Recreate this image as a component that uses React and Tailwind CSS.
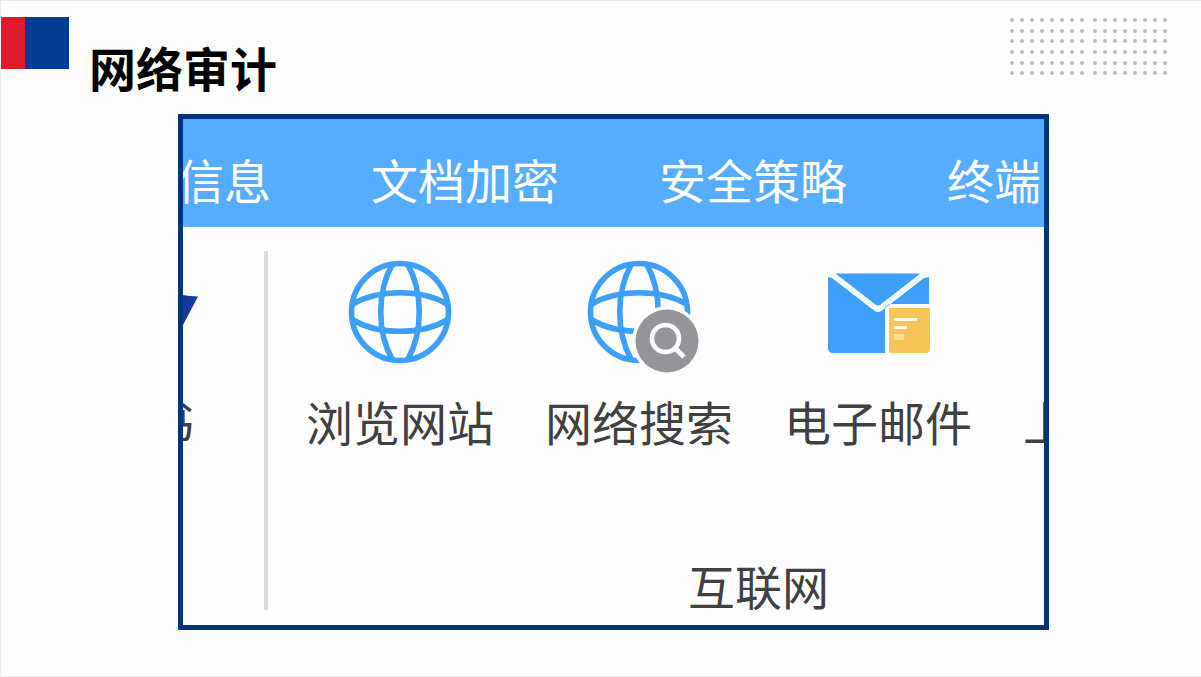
const DOT_COLUMNS = [3, 13, 23, 33, 43, 53, 63, 73, 86, 96, 106, 116, 126, 136, 146, 156];
const DOT_ROWS = [3, 14, 24, 35, 46, 56];

const TABS = ['信息', '文档加密', '安全策略', '终端'];

const BrandMark = () => (
  <div className="flex h-[52px] w-[68px] shrink-0">
    <div className="w-6 bg-[#e11b2e]" />
    <div className="flex-1 bg-[#003c96]" />
  </div>
);

const DotGrid = () => (
  <svg width="160" height="60" viewBox="0 0 160 60" className="shrink-0" fill="#b9b8c8" aria-hidden="true">
    {DOT_ROWS.map((y) =>
      DOT_COLUMNS.map((x) => <circle key={`${x}-${y}`} cx={x} cy={y} r="2" />)
    )}
  </svg>
);

const GlobeLines = () => (
  <g fill="none" stroke="#3d9ff8" strokeWidth="5.6">
    <circle cx="60" cy="55" r="48.5" />
    <path d="M52 8 C37 35 37 75 52 102 M68 8 C83 35 83 75 68 102" />
    <path d="M13 47 C38 32 82 32 107 47 M13 63 C38 78 82 78 107 63" />
  </g>
);

const GlobeIcon = () => (
  <svg width="120" height="120" viewBox="0 0 120 120" aria-hidden="true">
    <GlobeLines />
  </svg>
);

const GlobeSearchIcon = () => (
  <svg width="120" height="120" viewBox="0 0 120 120" aria-hidden="true">
    <GlobeLines />
    <circle cx="88" cy="84" r="35" fill="#fefefe" />
    <circle cx="88" cy="84" r="31.5" fill="#939599" />
    <circle cx="86.5" cy="81.5" r="13.5" fill="none" stroke="#fefefe" strokeWidth="4.6" />
    <path d="M96 91 L105 100" stroke="#fefefe" strokeWidth="5" fill="none" />
  </svg>
);

const MailIcon = () => (
  <svg width="120" height="120" viewBox="0 0 120 120" aria-hidden="true">
    <path d="M16 16.5 H103 L60 50 Z" fill="#3d9ff8" />
    <path
      d="M10 20 L14 21 L56 53.5 Q60 56.5 64 53.5 L106 21 L111 20 V47 H67 V96 H15 Q10 96 10 91 Z"
      fill="#3d9ff8"
    />
    <path d="M14 17 L56 49.5 Q60 52.5 64 49.5 L106 17" fill="none" stroke="#f2f8ff" strokeWidth="5" />
    <path d="M71 51 H112 V92 Q112 96 108 96 H71 Z" fill="#f3c657" />
    <path d="M76 62.5 H99 M76 70.5 H89" stroke="#fff8e6" strokeWidth="3.2" />
    <path d="M76 80 H86" stroke="#f9dd98" strokeWidth="6" />
  </svg>
);

const TriangleIcon = () => (
  <svg width="52" height="120" viewBox="0 0 52 120" className="max-w-none" aria-hidden="true">
    <path d="M0 38 H36 Q42 39 51 39.5 L35 70 H0 Z" fill="#153a9b" />
  </svg>
);

const ITEMS = [
  { label: '浏览网站', icon: <GlobeIcon /> },
  { label: '网络搜索', icon: <GlobeSearchIcon /> },
  { label: '电子邮件', icon: <MailIcon /> },
  { label: '上', icon: null },
];

const RibbonItem = ({ label, icon }) => (
  <button type="button" className="flex w-[188px] shrink-0 cursor-pointer flex-col gap-5 text-left">
    <span className="flex h-[120px] justify-center">{icon}</span>
    <span>{label}</span>
  </button>
);

const App = () => {
  return (
    <main className="min-h-screen border-t border-l border-b border-[#ebebf0] bg-[#fdfdfe] pt-4 pb-[46px] font-['Noto_Sans_CJK_SC',sans-serif]">
      <header className="flex h-[97px] items-start">
        <BrandMark />
        <h1 className="mt-[26px] ml-5 flex-1 text-[47px] leading-[48px] font-bold text-black">网络审计</h1>
        <div className="mr-8">
          <DotGrid />
        </div>
      </header>

      <section className="mr-[152px] ml-[177px] overflow-hidden border-[5px] border-[#003579] bg-[#fefefe] text-[47px] leading-[48px] font-normal whitespace-nowrap">
        <nav className="flex h-[108px] items-center bg-[#56adff] pt-3">
          <div className="-ml-1.5 flex gap-[100px] text-white">
            {TABS.map((tab) => (
              <button key={tab} type="button" className="shrink-0 cursor-pointer">
                {tab}
              </button>
            ))}
          </div>
        </nav>

        <div className="-ml-9 flex pt-6 pb-[15px] text-[#404040]">
          <button type="button" className="flex w-[47px] shrink-0 cursor-pointer flex-col gap-5 pt-[6px] text-left">
            <TriangleIcon />
            <span>书</span>
          </button>

          <div className="ml-[70px] h-[359px] w-1 shrink-0 bg-[#dadada]" />

          <div className="ml-[38px] flex shrink-0 flex-col pt-[6px]">
            <div className="flex gap-[51px]">
              {ITEMS.map((item) => (
                <RibbonItem key={item.label} label={item.label} icon={item.icon} />
              ))}
            </div>
            <h2 className="mt-[116px] text-center">互联网</h2>
          </div>
        </div>
      </section>
    </main>
  );
};

export default App;
